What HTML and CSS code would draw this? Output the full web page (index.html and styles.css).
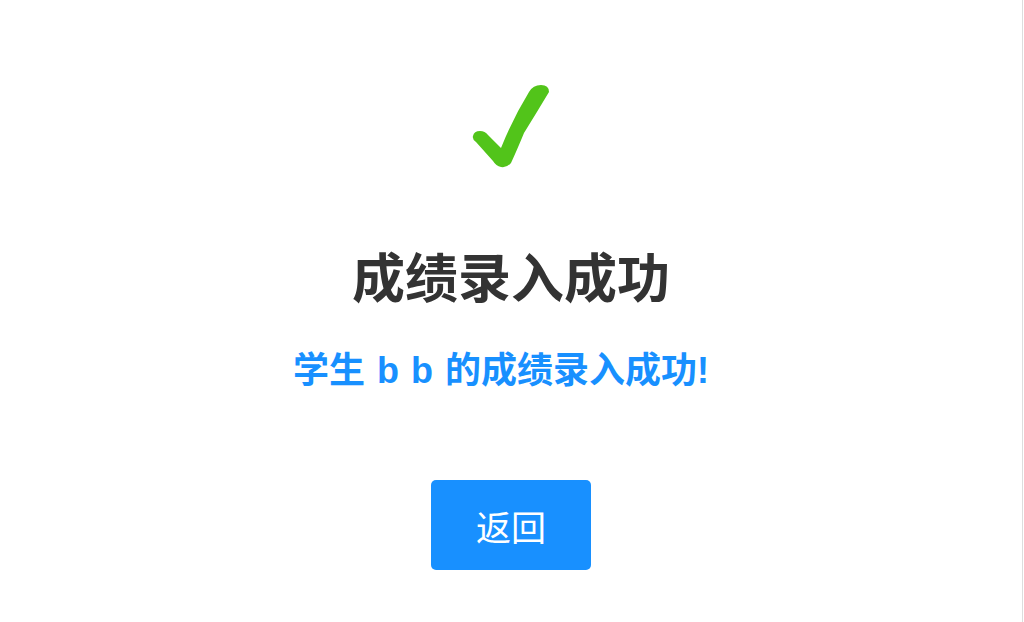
FILE: index.html
```html
<!DOCTYPE html>
<html lang="zh-CN">
<head>
<meta charset="utf-8">
<title>成绩录入成功</title>
<link rel="stylesheet" href="styles.css">
</head>
<body>
<div class="page">
  <svg class="check" viewBox="468 80 84 92" width="84" height="92" aria-hidden="true">
    <path d="M472 136 Q473 131 479 131 Q484 131 487 135 L500 148 Q512 118 528 92 Q532 85 540 85 Q548 85 548 92 Q536 112 523 133 Q516 150 510 163 Q506 168 500 167 Q495 166 492 161 L475 142 Q471 139 472 136 Z" fill="#52c41a"/>
  </svg>
  <h1 class="title">成绩录入成功</h1>
  <p class="message">学生 b b 的成绩录入成功!</p>
  <button class="back-btn" type="button">返回</button>
</div>
</body>
</html>
```

FILE: styles.css
```css
html, body {
  margin: 0;
  padding: 0;
  background: #ffffff;
}

body {
  font-family: "Noto Sans CJK SC", "Noto Sans", "Liberation Sans", sans-serif;
}

.page {
  box-sizing: border-box;
  width: 1023px;
  height: 622px;
  border-right: 1px solid #dddddd;
  display: flex;
  flex-direction: column;
  align-items: center;
  padding-top: 80px;
}

.check {
  display: block;
}

.title {
  margin: 72px 0 0;
  font-size: 53px;
  line-height: 62px;
  font-weight: 700;
  color: #333333;
}

.message {
  margin: 43px 20px 0 0;
  font-family: "Liberation Sans", "Noto Sans CJK SC", sans-serif;
  font-size: 36px;
  line-height: 44px;
  font-weight: 700;
  word-spacing: 2px;
  color: #1890ff;
}

.back-btn {
  margin-top: 87px;
  width: 160px;
  height: 90px;
  border: none;
  border-radius: 5px;
  background: #1890ff;
  color: #ffffff;
  font-family: "Noto Sans CJK SC", "Noto Sans", sans-serif;
  font-size: 35px;
  padding: 0;
}
```
